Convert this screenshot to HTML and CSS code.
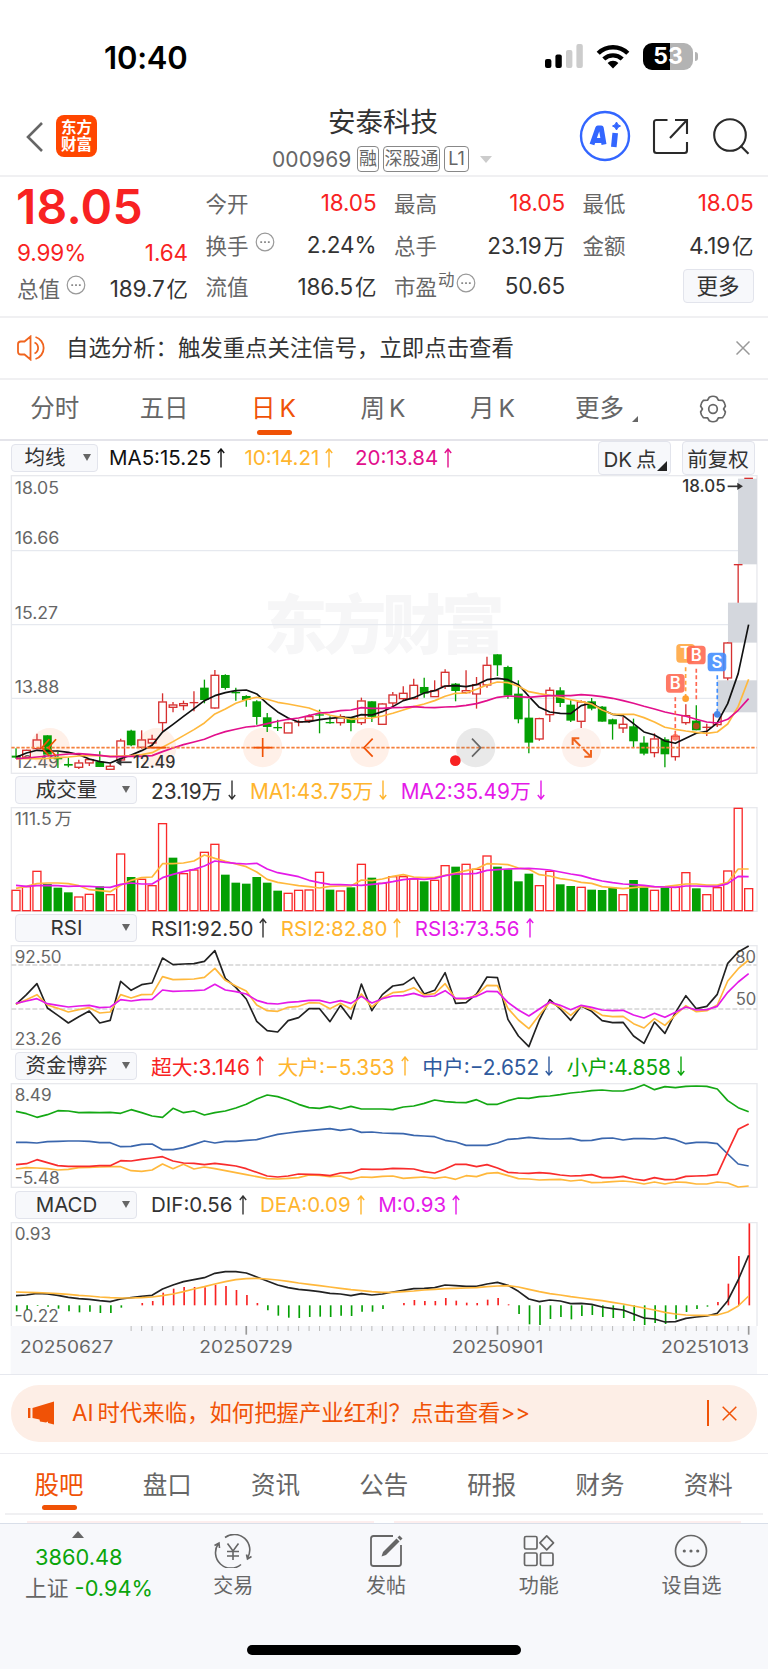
FILE: index.html
```
<!DOCTYPE html>
<html lang="zh-CN">
<head>
    <meta charset="UTF-8">
    <meta name="viewport" content="width=device-width, initial-scale=1.0">
    <title>安泰科技 000969</title>
    <link rel="stylesheet" href="styles.css">
</head>
<body>
    <svg class="defs" width="0" height="0">
        <symbol id="up" viewBox="0 0 8 20"><path d="M4 19.5V1M.8 5 4 1l3.2 4" fill="none" stroke="currentColor" stroke-width="1.4"/></symbol>
        <symbol id="down" viewBox="0 0 8 20"><path d="M4 .5V19M.8 15 4 19l3.2-4" fill="none" stroke="currentColor" stroke-width="1.4"/></symbol>
        <symbol id="dots" viewBox="0 0 20 20"><circle cx="10" cy="10" r="8.8" fill="none" stroke="#999" stroke-width="1.2"/><path d="M5.3 9.2h1.8v1.8H5.3zM9.1 9.2h1.8v1.8H9.1zM12.9 9.2h1.8v1.8h-1.8z" fill="#888"/></symbol>
    </svg>

    <!-- 状态栏 -->
    <div class="status">
        <span class="time">10:40</span>
        <svg class="signal" width="39" height="24" viewBox="0 0 39 24">
            <rect x="0" y="15" width="6.4" height="9" rx="2"/><rect x="10.4" y="10.5" width="6.4" height="13.5" rx="2"/>
            <rect x="21" y="6" width="6.4" height="18" rx="2" fill="#ccc"/><rect x="31.4" y="0" width="6.4" height="24" rx="2" fill="#ccc"/>
        </svg>
        <svg class="wifi" width="34" height="25" viewBox="0 0 34 25">
            <path d="M2.2 9.3a21 21 0 0 1 29.6 0M7.8 15a13.4 13.4 0 0 1 18.4 0" fill="none" stroke="#000" stroke-width="4.4"/>
            <path d="M17 24.4l-5.4-5.5a7.8 7.8 0 0 1 10.8 0z"/>
        </svg>
        <div class="battery"><span>5</span><span>3</span></div>
        <i class="battery-cap"></i>
    </div>

    <!-- 顶部导航 -->
    <header>
        <svg class="back" width="18" height="32" viewBox="0 0 18 32"><path d="M16 2 2 16l14 14" fill="none" stroke="#666" stroke-width="2.6"/></svg>
        <div class="logo">东方<br>财富</div>
        <div class="title">
            <h1>安泰科技</h1>
            <div class="code"><span>000969</span><b>融</b><b class="wide">深股通</b><b>L1</b><i class="tri"></i></div>
        </div>
        <svg class="ai" width="52" height="52" viewBox="0 0 52 52">
            <circle cx="26" cy="26" r="24" fill="#fff" stroke="#36f" stroke-width="2.4"/>
            <path d="M13 34.500 18.800 18h3.400l2.800 16.500M15.500 30.500h8" fill="none" stroke="#36f" stroke-width="5" stroke-linejoin="round"/>
            <path d="M36.200 23 34.800 37" stroke="#36f" stroke-width="5.600"/>
            <path d="M37.500 12q.8 3.200 4 4-3.200.8-4 4-.8-3.200-4-4 3.200-.8 4-4z" fill="#36f" stroke="#36f"/>
        </svg>
        <svg class="share" width="38" height="38" viewBox="0 0 38 38"><path d="M15.500 2H4.500Q2 2 2 4.500v28Q2 35 4.500 35h28q2.500 0 2.500-2.500V24M23 2h12v14M34.500 2.500 18 20" fill="none" stroke="#2a2a2a" stroke-width="2.100"/></svg>
        <svg class="search" width="38" height="38" viewBox="0 0 38 38"><circle cx="18" cy="18" r="15.800" fill="none" stroke="#2a2a2a" stroke-width="2.100"/><path d="m28.500 28.800 8 8" stroke="#2a2a2a" stroke-width="2.200"/></svg>
    </header>

    <!-- 行情 -->
    <section class="quote">
        <div class="main">
            <strong>18.05</strong>
            <div class="line red change"><span>9.99%</span><span>1.64</span></div>
            <div class="line"><label>总值<svg class="dots"><use href="#dots"/></svg></label><span>189.7<em>亿</em></span></div>
        </div>
        <div class="col">
            <div class="line red"><label>今开</label><span>18.05</span></div>
            <div class="line"><label>换手<svg class="dots"><use href="#dots"/></svg></label><span>2.24%</span></div>
            <div class="line"><label>流值</label><span>186.5<em>亿</em></span></div>
        </div>
        <div class="col">
            <div class="line red"><label>最高</label><span>18.05</span></div>
            <div class="line"><label>总手</label><span>23.19<em>万</em></span></div>
            <div class="line"><label>市盈<sup>动</sup><svg class="dots near"><use href="#dots"/></svg></label><span>50.65</span></div>
        </div>
        <div class="col">
            <div class="line red"><label>最低</label><span>18.05</span></div>
            <div class="line"><label>金额</label><span>4.19<em>亿</em></span></div>
            <div class="line end"><button class="more">更多</button></div>
        </div>
    </section>

    <div class="notice">
        <svg width="30" height="26" viewBox="0 0 30 26"><path d="M13.500 1.500v23L7.500 19.500H3.800Q1 19.500 1 16.700V9.300Q1 6.500 3.800 6.500h3.700zM17.500 7.500a6 6 0 0 1 0 11M18.500 2a11.500 11.500 0 0 1 0 22" fill="none" stroke="#f0641e" stroke-width="1.800"/></svg>
        <p>自选分析：触发重点关注信号，立即点击查看</p>
        <svg class="close" width="14" height="14" viewBox="0 0 14 14"><path d="m.5.5 13 13M13.500.5l-13 13" stroke="#999" stroke-width="1.500"/></svg>
    </div>

    <nav class="periods">
        <a>分时</a><a>五日</a><a class="on">日<s></s>K</a><a>周<s></s>K</a><a>月<s></s>K</a><a class="drop">更多</a>
        <svg width="28" height="28" viewBox="0 0 28 28"><path d="M10.300 2.200Q14 .3 17.700 2.200L19.500 5.200 23.600 5.400Q26 7.500 26.400 11L24.600 14 26.400 17Q26 20.500 23.600 22.600L19.500 22.800 17.700 25.800Q14 27.700 10.300 25.800L8.500 22.800 4.400 22.600Q2 20.500 1.600 17L3.400 14 1.600 11Q2 7.500 4.400 5.400L8.500 5.200z" fill="none" stroke="#666" stroke-width="1.700" stroke-linejoin="round"/><circle cx="14" cy="14" r="4.300" fill="none" stroke="#666" stroke-width="1.700"/></svg>
    </nav>

    <!-- K线图 -->
    <div class="legend first">
        <button class="pick small">均线</button>
        <span class="v black m1">MA5:15.25<svg><use href="#up"/></svg></span>
        <span class="v orange m2">10:14.21<svg><use href="#up"/></svg></span>
        <span class="v pink m3">20:13.84<svg><use href="#up"/></svg></span>
        <button class="side dk">DK<s></s>点</button>
        <button class="side">前复权</button>
    </div>
    <svg class="chart" id="kline" viewBox="0 29 2304 898" width="768" height="299.300"></svg>

    <div class="legend l-vol">
        <button class="pick">成交量</button>
        <span class="v">23.19万<svg><use href="#down"/></svg></span>
        <span class="v orange">MA1:43.75万<svg><use href="#down"/></svg></span>
        <span class="v purple">MA2:35.49万<svg><use href="#down"/></svg></span>
    </div>
    <svg class="chart" id="volume" viewBox="0 111 2304 315" width="768" height="105"></svg>

    <div class="legend l-rsi">
        <button class="pick">RSI</button>
        <span class="v">RSI1:92.50<svg><use href="#up"/></svg></span>
        <span class="v orange">RSI2:82.80<svg><use href="#up"/></svg></span>
        <span class="v purple">RSI3:73.56<svg><use href="#up"/></svg></span>
    </div>
    <svg class="chart" id="rsi" viewBox="0 525 2304 315" width="768" height="105"></svg>

    <div class="legend l-fund">
        <button class="pick">资金博弈</button>
        <span class="v red">超大:3.146<svg><use href="#up"/></svg></span>
        <span class="v orange">大户:−5.353<svg><use href="#up"/></svg></span>
        <span class="v blue">中户:−2.652<svg><use href="#down"/></svg></span>
        <span class="v green">小户:4.858<svg><use href="#down"/></svg></span>
    </div>
    <svg class="chart" id="fund" viewBox="0 99 2304 315" width="768" height="105"></svg>

    <div class="legend l-macd">
        <button class="pick">MACD</button>
        <span class="v">DIF:0.56<svg><use href="#up"/></svg></span>
        <span class="v orange">DEA:0.09<svg><use href="#up"/></svg></span>
        <span class="v purple">M:0.93<svg><use href="#up"/></svg></span>
    </div>
    <svg class="chart" id="macd" viewBox="0 516 2304 456" width="768" height="152"></svg>

    <!-- 推广条 -->
    <div class="promo-wrap">
        <div class="promo">
            <svg width="28" height="24" viewBox="0 0 28 24"><path d="M0 7h2.400v10H0zM4.500 7 26 .5v23L20 22v-1.500L18 21.500l-6-1-.5-2-7-1.500z" fill="#f05206"/></svg>
            <p>AI<s></s>时代来临，如何把握产业红利？点击查看&gt;&gt;</p>
            <i></i>
            <svg class="close" width="15" height="15" viewBox="0 0 15 15"><path d="m.7.7 13.600 13.600M14.300.7.7 14.300" stroke="#f05206" stroke-width="1.500"/></svg>
        </div>
    </div>

    <nav class="sections">
        <a class="on">股吧</a><a>盘口</a><a>资讯</a><a>公告</a><a>研报</a><a>财务</a><a>资料</a>
    </nav>
    <div class="peek"><i></i><i></i></div>

    <!-- 底部工具栏 -->
    <footer>
        <div class="index">
            <i class="caret"></i>
            <span class="green">3860.48</span>
            <div>上证<span class="green">-0.94%</span></div>
        </div>
        <div class="tool">
            <svg width="38" height="34" viewBox="0 0 38 34"><g fill="none" stroke="#666" stroke-width="1.600"><path d="M11 3.500A15.500 15.500 0 0 1 33.500 24M27 30.500A15.500 15.500 0 0 1 4.500 9.500M.5 11.500l4.500-2.500.5 5M37.500 22.500 33.500 25l-1-4.500"/><path d="m13.500 9.500 5.500 7.500 5.500-7.500M19 17v9M13 17.500h12M13 22h12"/></g></svg>
            <span>交易</span>
        </div>
        <div class="tool">
            <svg width="34" height="34" viewBox="0 0 34 34"><path d="M24 2H4.500Q2 2 2 4.500v25Q2 32 4.500 32h25q2.500 0 2.500-2.500V11" fill="none" stroke="#666" stroke-width="1.800"/><path d="m12.500 22.500 1.500-4.500L27.500 4.500l3 3L17 21z" fill="#666"/><path d="m28.500 3.500 2-2 3 3-2 2z" fill="#666"/></svg>
            <span>发帖</span>
        </div>
        <div class="tool">
            <svg width="32" height="34" viewBox="0 0 32 34"><g fill="none" stroke="#666" stroke-width="1.700"><rect x="1.500" y="2.500" width="12.500" height="12.500" rx="1.500"/><rect x="1.500" y="19" width="12.500" height="12.500" rx="1.500"/><rect x="17.500" y="19" width="12.500" height="12.500" rx="1.500"/><path d="M23.700 1.800 30.500 8.800 23.700 15.800 16.900 8.800z" stroke-linejoin="round"/></g></svg>
            <span>功能</span>
        </div>
        <div class="tool">
            <svg width="34" height="34" viewBox="0 0 34 34"><circle cx="17" cy="17" r="15.500" fill="none" stroke="#666" stroke-width="1.700"/><g fill="#666"><circle cx="10.300" cy="17" r="1.600"/><circle cx="17" cy="17" r="1.600"/><circle cx="23.700" cy="17" r="1.600"/></g></svg>
            <span>设自选</span>
        </div>
    </footer>
    <div class="home"><i></i></div>
    <script src="chart.js"></script>
</body>
</html>
```
FILE: styles.css
```
* { box-sizing: border-box; }
body {
  margin: 0;
  width: 768px;
  height: 1669px;
  overflow: hidden;
  background: #fff;
  color: #333;
  font-family: Inter, "Noto Sans CJK SC", sans-serif;
}
h1, p { margin: 0; font-weight: normal; }
i, em { font-style: normal; }
s { display: inline-block; width: 4px; }
svg { display: block; flex: none; }
button { font: inherit; color: inherit; padding: 0; background: #f7f8fb; border: 1.5px solid #e2e4ec; border-radius: 4px; }
.defs { position: absolute; }
.red { color: #f82222; }
.green { color: #0ba50b; }
.blue { color: #2f5a9e; }
.orange { color: #ffb52e; }
.pink { color: #e2108c; }
.purple { color: #e41ae8; }
.black { color: #111; }

/* 状态栏 */
.status { display: flex; height: 110px; padding-left: 104px; align-items: flex-start; color: #000; }
.time { width: 441px; margin-top: 39px; font-size: 31px; line-height: 37px; font-weight: 600; letter-spacing: -.2px; }
.signal { margin-top: 44px; }
.wifi { margin: 44px 0 0 12px; }
.battery { display: flex; width: 50px; height: 27px; margin: 43px 0 0 13px; border-radius: 9px; overflow: hidden; background: linear-gradient(90deg, #000 53%, #b3b3b3 53%); color: #fff; font-size: 23px; line-height: 27px; font-weight: 700; justify-content: center; }
.battery-cap { width: 3px; height: 9px; margin: 52px 0 0 2px; background: #b3b3b3; border-radius: 0 3px 3px 0; }

/* 导航 */
header { display: flex; height: 67px; border-bottom: 2px solid #f0f0f2; }
.back { margin: 11px 0 0 26px; }
.logo { width: 41px; height: 42px; margin: 5px 0 0 12px; padding-top: 4px; border-radius: 8px; background: #ff4600; color: #fff; font-size: 15.500px; line-height: 17px; font-weight: 700; text-align: center; }
.title { width: 240px; margin-left: 165px; }
.title h1 { margin-left: 66px; margin-top: -8px; font-size: 27.500px; line-height: 40px; }
.code { display: flex; height: 26px; margin-top: 4px; margin-left: 10px; color: #666; font-size: 21px; line-height: 27px; align-items: flex-start; }
.code span { width: 85px; letter-spacing: .1px; }
.code b { width: 22px; height: 26px; margin-right: 4px; border: 1.5px solid #888; border-radius: 4px; font-size: 18px; line-height: 24px; font-weight: normal; text-align: center; white-space: nowrap; }
.code b:last-of-type { width: 25px; }
.code .wide { width: 57px; }
.tri { margin: 10px 0 0 7px; border: 6px solid transparent; border-top: 7px solid #ccc; border-bottom: 0; }
.ai { margin: 0 0 0 77px; }
.share { margin: 8px 0 0 21px; }
.search { margin: 7px 0 0 22px; }

/* 行情 */
.quote { display: flex; height: 141px; padding-top: 5px; border-bottom: 2px solid #f0f0f2; font-size: 22.500px; padding-left: 17px; }
.main { width: 171px; }
.main strong { display: block; height: 49px; font-size: 48px; line-height: 49px; font-weight: 600; color: #f82222; letter-spacing: .2px; margin-left: -1px; }
.col { width: 171px; margin-left: 17.500px; }
.line { display: flex; height: 41.500px; align-items: center; justify-content: space-between; white-space: nowrap; letter-spacing: -.1px; }
.line.end { justify-content: flex-end; }
.change { height: 43px; margin-bottom: -7px; }
.line label { display: flex; color: #666; font-size: 21.500px; letter-spacing: 0; }
.line em { margin-left: 2px; font-size: 21.500px; }
.dots { width: 20px; height: 20px; margin: 3px 0 0 6px; }
.near { margin-left: 1px; }
sup { font-size: 16.500px; line-height: 20px; height: 20px; margin-left: 1px; }
.more { width: 71px; height: 34px; line-height: 30px; font-size: 21.500px; }

.notice { display: flex; height: 62px; padding-left: 17px; align-items: center; border-bottom: 2px solid #f0f0f2; }
.notice p { width: 670px; margin-left: 19px; font-size: 22.400px; line-height: 32px; }

/* 周期 */
.periods { display: flex; height: 61px; border-bottom: 2px solid #e4e4ea; color: #666; font-size: 24.500px; line-height: 57px; padding-right: 41px; }
.periods a { width: 109.500px; text-align: center; position: relative; }
.periods .drop { width: 105px; }
.periods svg { margin: 15px 0 0 47px; }
.periods .on, .sections .on { color: #f05206; position: relative; }
.periods .on::after, .sections .on::after { content: ""; position: absolute; left: 50%; bottom: 4px; width: 35px; height: 5px; margin-left: -17px; border-radius: 3px; background: #f05206; }
.drop::after { content: ""; position: absolute; right: 14px; bottom: 17px; border: 3.500px solid #666; border-top-color: transparent; border-left-color: transparent; }

/* 指标行 */
.legend { position: relative; display: flex; height: 33px; padding-left: 15px; align-items: center; font-size: 20.500px; white-space: nowrap; }
.first { padding-left: 11px; height: 33.700px; font-size: 20.500px; }
.l-macd { height: 34px; }
.pick { position: relative; width: 122px; height: 28px; margin-right: 14px; padding-right: 19px; line-height: 24px; font-size: 20.500px; }
.pick::after { content: ""; position: absolute; right: 6px; top: 9px; border: 4px solid transparent; border-top: 7px solid #666; border-bottom: 0; }
.small { width: 87px; margin-right: 11px; }
.v { display: flex; align-items: center; margin-right: 13.500px; }
.v svg { width: 8px; height: 20px; margin-left: 6px; }
.l-vol .v { font-size: 20.800px; }
.l-fund .v { font-size: 20.800px; }
.m1 { width: 122px; }
.m2 { width: 97px; }
.m3 { width: 229px; }
.side { width: 73px; height: 34px; }
.dk { position: relative; margin-right: 11px; padding-right: 8px; }
.dk::after { content: ""; position: absolute; right: 3px; bottom: 3px; border: 5px solid #222; border-top-color: transparent; border-left-color: transparent; }
.chart { font-family: Inter, "Noto Sans CJK SC", sans-serif; }

/* 推广条 */
.promo-wrap { height: 80px; padding: 10px 11px 0; border-top: 1.500px solid #e6e8ee; border-bottom: 1.500px solid #ececf0; }
.promo { display: flex; height: 57px; padding-left: 17px; align-items: center; border-radius: 28px; background: #fdeee6; color: #f05206; font-size: 22.400px; }
.promo p { width: 635px; margin-left: 16px; line-height: 32px; }
.promo i { width: 1.500px; height: 26px; margin-right: 13px; background: #f05206; }

.sections { display: flex; height: 61px; margin: 0 5px; border-bottom: 2px solid #f0f0f2; color: #666; font-size: 24.500px; line-height: 62px; }
.sections a { width: 108.200px; text-align: center; }
.sections .on::after { bottom: 3px; left: 50%; }
.peek { display: flex; height: 8px; padding: 6px 27px 0; gap: 20px; }
.peek i { flex: 1; height: 2px; background: #fdeeee; }

/* 底部 */
footer { display: flex; height: 94px; background: #f7f8fb; border-top: 1.500px solid #d9dfe9; color: #666; }
.index { width: 157px; padding-left: 25px; font-size: 21.800px; }
.index > span { display: block; margin: 5px 0 0 10px; line-height: 29px; }
.index div { display: flex; gap: 6px; line-height: 32px; }
.caret { display: block; width: 12px; margin: 7px 0 0 47px; border: 6px solid transparent; border-bottom: 7px solid #666; border-top: 0; }
.tool { width: 152.700px; padding-top: 10px; display: flex; flex-direction: column; align-items: center; font-size: 20px; line-height: 36px; }
.home { height: 52px; padding-top: 28px; background: #f7f8fb; }
.home i { display: block; width: 274px; height: 10px; margin: 0 auto; border-radius: 5px; background: #000; }
```
FILE: chart.js
```
// 每根K线的横坐标，图表坐标为屏幕像素的3倍
const X0 = 48, STEP = 31.4;
const RED = '#d63030', GREEN = '#04a004';
const px = i => X0 + STEP * i;

const line = (d, color, w = 5) =>
    `<polyline points="${d.map((y, i) => px(i).toFixed(1) + ',' + y).join(' ')}" fill="none" stroke="${color}" stroke-width="${w}" stroke-linejoin="round"/>`;
const rect = (x, y, w, h, fill, extra = '') => `<rect x="${x}" y="${y}" width="${w}" height="${h}" fill="${fill}" ${extra}/>`;
const seg = (x1, y1, x2, y2, color, w = 4, extra = '') => `<path d="M${x1} ${y1}L${x2} ${y2}" stroke="${color}" stroke-width="${w}" fill="none" ${extra}/>`;
const text = (x, y, s, len, fill = '#666', extra = '') => `<text x="${x}" y="${y}" font-size="50" fill="${fill}" textLength="${len}" lengthAdjust="spacingAndGlyphs" ${extra}>${s}</text>`;
const frame = (y, h) => rect(34, y, 2237, h, 'none', 'stroke="#e8e9ed" stroke-width="4"');
const draw = (id, parts) => { document.getElementById(id).innerHTML = parts.join(''); };

// [方向, 最高, 实体上沿, 实体下沿, 最低]
const candles = [
    [0,849,871,877,880],[1,853,854,876,878],[1,805,823,850,852],[0,810,810,868,870],[0,860,877,882,908],[0,877,896,901,906],
    [1,883,892,906,911],[1,880,882,893,902],[0,858,889,905,905],[1,895,902,912,914],[1,820,826,884,886],[0,793,796,840,843],
    [1,795,823,846,850],[1,808,821,833,840],[1,684,709,772,797],[1,710,718,726,741],[1,706,714,721,735],[1,678,711,713,738],
    [0,643,667,704,714],[1,614,629,728,730],[0,627,629,668,673],[0,667,680,684,706],[0,690,692,704,724],[0,705,708,755,778],
    [0,743,756,785,800],[0,763,785,789,797],[1,770,772,803,803],[1,763,769,773,783],[1,747,753,765,773],[0,733,747,751,804],
    [0,753,770,774,775],[1,747,753,772,781],[0,755,757,773,798],[1,697,706,772,779],[0,708,708,755,770],[1,713,715,777,777],
    [1,680,688,713,725],[1,663,683,700,707],[1,640,659,700,702],[0,637,665,685,697],[1,645,675,694,694],[1,612,620,663,671],
    [0,653,655,677,708],[1,615,675,682,685],[1,635,657,686,730],[1,574,599,659,667],[0,567,567,600,632],[0,601,605,691,700],
    [0,645,685,762,774],[0,700,757,832,864],[1,757,759,821,826],[1,666,674,748,770],[0,666,675,713,725],[0,705,718,766,770],
    [1,705,709,768,788],[0,698,708,730,735],[0,722,724,769,769],[0,760,762,777,823],[1,755,776,788,803],[0,760,783,828,848],
    [0,813,832,865,870],[1,804,820,862,876],[0,816,822,867,906],[1,806,812,874,886],[1,717,750,772,778],[0,720,766,795,795],
    [1,775,785,787,812],[1,742,746,778,785],[1,530,532,638,645],[1,297,297,298,412],[1,38,38,40,40]
];
const ma5 = [876,863,855,857,857,861,868,881,889,893,880,869,856,840,800,777,753,730,706,691,682,676,674,686,715,740,758,770,769,763,759,756,757,748,749,739,724,706,697,683,676,662,661,664,658,643,639,643,658,693,726,740,744,745,721,713,733,747,751,775,800,809,827,834,819,804,798,773,715,625,478];
const ma10 = [880,880,880,879,877,875,872,870,871,873,872,871,868,862,846,829,811,793,773,746,731,714,703,696,702,711,716,722,728,740,750,756,762,759,758,752,744,734,724,716,706,693,684,683,672,659,650,652,663,679,685,690,696,703,709,716,734,747,747,747,757,770,786,792,797,801,804,800,776,724,642];
const ma20 = [880,878,875,872,869,866,865,867,870,874,874,873,873,871,859,848,838,830,822,809,799,792,785,782,775,768,762,758,751,743,741,736,734,727,729,729,727,726,724,726,727,725,724,720,715,706,696,692,694,696,693,691,691,691,688,690,694,699,706,714,723,731,740,747,753,762,770,773,762,735,700];

const candle = ([up, hi, top, bot, lo], i) => {
    const x = px(i), c = up ? RED : GREEN, h = bot - top;
    if (!up) return seg(x, hi, x, lo, c) + rect(x - 13, top, 26, Math.max(h, 4), c);
    const body = h < 5
        ? rect(x - 13, top - 1, 26, 4, c)
        : rect(x - 11.500, top + 1, 23, h - 1, 'none', `stroke="${c}" stroke-width="4"`);
    return seg(x, hi, x, top, c) + seg(x, bot, x, lo, c) + body;
};
const badge = (x, y, s, color) =>
    rect(x, y, 56, 56, color, 'rx="11" fill-opacity=".88"') +
    `<text x="${x + 28}" y="${y + 46}" font-size="50" font-weight="600" fill="#fff" text-anchor="middle">${s}</text>`;
const dash = (x, y1, y2, color) => seg(x, y1, x, y2, color, 5, 'stroke-dasharray="12 8"');
const disc = (x, fill = '#fff0e8') => `<circle cx="${x}" cy="847" r="59" fill="${fill}"/>`;

draw('kline', [
    `<text x="792" y="549" font-size="190" font-weight="900" fill="#f6f6f7" textLength="722">东方财富</text>`,
    frame(31, 893),
    seg(34, 256, 2270, 256, '#e6e9ef'), seg(34, 478, 2270, 478, '#e6e9ef'), seg(34, 699, 2270, 699, '#e6e9ef'),
    rect(2214, 40, 57, 257, '#d4d7dd'), rect(2184, 412, 87, 120, '#d4d7dd'), rect(2152, 645, 119, 96, '#d4d7dd'),
    disc(150), disc(470), disc(788), disc(1108), disc(1745, '#fdf1ec'),
    text(44, 87, '18.05', 133), text(44, 237, '16.66', 134), text(44, 460, '15.27', 130), text(44, 683, '13.88', 134), text(46, 907, '12.49', 130),
    ...candles.map(candle),
    line(ma5, '#111'), line(ma10, '#ffb83c'), line(ma20, '#e2108c'),
    seg(34, 847, 2270, 847, '#f5803c', 5, 'stroke-dasharray="10 5"'),
    // 图上操作按钮
    `<path d="M148 822l-23 25 23 25M168 822l-23 25 23 25M444 847h54M761 847h56M788 818v57M1118 820l-26 27 26 27" fill="none" stroke="#f05206" stroke-width="5"/>`,
    `<path d="M1741 842l-23-23M1718 839v-20h20M1750 851l23 23M1773 854v20h-20" fill="none" stroke="#f0641e" stroke-width="6"/>`,
    disc(1427, 'rgba(120,120,120,.16)'),
    `<path d="M1416 820l26 27-26 27" fill="none" stroke="#666" stroke-width="5"/>`,
    `<circle cx="1366" cy="886" r="16" fill="#f82222"/>`,
    // 最高最低标注
    text(2047, 81, '18.05', 130, '#333', 'font-weight="500"'), seg(2183, 63, 2220, 63, '#333', 5), `<path d="M2212 52l17 11-17 11z" fill="#333"/>`,
    text(399, 908, '12.49', 127, '#333', 'font-weight="500"'), seg(358, 891, 395, 891, '#333', 5), `<path d="M364 880l-17 11 17 11z" fill="#333"/>`,
    // 买卖点
    dash(2026, 696, 812, '#ff6650'), dash(2057, 606, 700, '#ffa53c'), dash(2089, 610, 708, '#ff6650'), dash(2152, 630, 746, '#3c8cff'),
    `<circle cx="2026" cy="816" r="10" fill="#ff6650" fill-opacity=".8"/><circle cx="2057" cy="700" r="10" fill="#ffa030"/><circle cx="2089" cy="782" r="10" fill="#b0521e"/><circle cx="2152" cy="747" r="10" fill="#4888e8"/>`,
    badge(1998, 626, 'B', '#ff6650'), badge(2029, 536, 'T', '#ffa53c'), badge(2061, 541, 'B', '#ff6650'), badge(2123, 562, 'S', '#408cff')
]);

// 成交量，1为阳线
const volTop = [361,350,304,343,354,368,381,373,350,374,252,322,328,347,161,264,311,300,247,223,315,339,342,322,339,363,370,361,360,307,360,363,353,283,324,340,320,320,327,335,331,287,291,283,298,258,291,299,335,312,347,304,344,349,352,360,361,354,374,331,353,361,353,352,308,356,374,353,303,115,356];
const volColors = [1,1,1,0,0,0,1,1,0,1,1,0,1,1,1,0,1,1,1,1,0,0,0,0,0,0,1,1,1,1,0,1,0,1,0,1,1,1,1,0,1,1,0,1,1,1,0,0,0,0,1,1,0,0,1,0,0,0,1,0,0,1,0,1,1,0,1,1,1,1,1];
const vma1 = [355,349,341,339,339,341,347,359,362,365,346,331,323,321,281,281,279,273,255,265,274,282,290,306,328,337,342,347,350,354,349,348,348,330,332,327,319,314,321,323,322,316,309,302,296,281,282,284,294,298,314,318,326,330,337,340,350,353,356,353,350,351,350,346,342,342,345,345,337,297,297];
const vma2 = [346,349,347,346,347,349,348,349,351,352,343,339,342,342,323,313,305,298,288,273,277,280,282,280,297,308,314,320,331,338,343,344,345,346,343,340,335,329,326,328,325,317,312,312,310,301,299,297,296,295,297,300,306,312,317,326,333,338,342,344,346,350,351,352,348,348,349,349,341,319,320];
draw('volume', [
    frame(113, 311),
    text(44, 164, '111.5<tspan dx="8">万</tspan>', 172),
    ...volTop.map((y, i) => volColors[i]
        ? rect(px(i) - 12, y, 24, 422 - y, '#fff', 'stroke="#fa2a2a" stroke-width="4"')
        : rect(px(i) - 13, y - 1, 26, 425 - y, GREEN)),
    line(vma1, '#ffb83c'), line(vma2, '#e41ae8')
]);

// RSI
const rsi1 = [703,674,641,714,736,759,740,723,759,751,634,661,644,639,564,584,582,581,574,542,625,652,687,754,782,786,752,743,716,716,755,706,747,642,722,674,648,643,622,672,661,608,700,698,672,621,623,748,798,830,750,689,717,751,708,724,752,758,757,798,820,756,790,728,677,716,709,673,580,546,528];
const rsi2 = [703,689,674,705,715,726,719,713,729,726,674,684,674,673,620,629,628,627,622,595,631,648,663,705,722,724,712,709,698,699,716,700,717,672,711,684,668,665,653,675,671,641,687,687,675,646,647,715,750,776,735,697,712,736,708,718,736,740,739,761,774,746,766,735,707,725,722,705,633,596,570];
const rsi3 = [700,693,686,701,706,711,708,706,713,711,689,693,689,688,660,664,663,662,660,643,660,665,672,691,700,702,697,695,691,691,699,692,700,679,699,686,678,677,670,680,678,662,685,685,679,664,665,697,720,738,717,696,706,719,706,712,720,722,721,735,744,730,742,727,711,720,719,709,667,636,611];
draw('rsi', [
    frame(527, 311),
    seg(34, 585, 2270, 585, '#d4d4d4', 4, 'stroke-dasharray="15 6"'), seg(34, 717, 2270, 717, '#d4d4d4', 4, 'stroke-dasharray="15 6"'),
    text(44, 578, '92.50', 141), text(44, 826, '23.26', 141), text(2206, 578, '80', 62), text(2207, 706, '50', 62),
    line(rsi1, '#222'), line(rsi2, '#ffb83c'), line(rsi3, '#e41ae8')
]);

// 资金博弈
const small = [184,191,202,194,182,183,188,187,188,187,190,179,188,198,202,175,188,183,195,188,183,174,163,147,135,140,150,163,173,175,169,177,169,177,177,177,179,171,168,160,150,155,157,158,149,163,163,152,144,145,140,138,134,129,126,122,120,123,123,116,104,119,110,113,109,108,109,117,152,173,185];
const mid = [277,277,279,275,274,273,273,274,278,278,290,289,283,282,299,299,293,283,273,279,274,274,271,269,261,253,249,245,242,239,236,241,237,247,246,249,250,251,256,258,260,271,276,286,286,286,279,268,266,262,265,267,267,265,272,271,265,264,270,266,266,267,263,269,281,277,277,281,312,342,348];
const big = [357,353,354,356,360,358,353,352,351,350,350,362,364,360,342,356,343,357,351,356,362,368,374,380,386,387,385,383,375,376,380,378,388,381,382,379,378,385,383,381,385,381,388,377,380,370,368,377,386,387,390,389,388,393,390,398,397,395,393,396,402,396,402,396,397,402,402,396,399,411,408];
const huge = [344,341,329,338,347,349,349,349,347,347,332,333,328,324,320,333,339,340,344,340,344,348,356,367,378,381,378,372,373,374,377,369,368,357,358,358,355,356,357,365,369,357,343,343,350,344,354,367,369,370,368,370,375,378,377,374,383,383,379,387,391,383,389,388,379,378,377,373,305,238,222];
draw('fund', [
    frame(101, 311),
    text(44, 153, '8.49', 111), text(44, 402, '-5.48', 135),
    line(small, '#14a814'), line(mid, '#3a66ad'), line(big, '#ffb83c'), line(huge, '#f82c2c')
]);

// MACD
const ZERO = 766;
const dif = [737,735,730,732,736,742,746,748,752,755,747,743,739,736,717,705,695,689,683,670,665,665,669,681,693,705,713,718,721,725,730,732,737,731,735,732,726,721,716,715,713,705,707,709,709,702,697,706,724,747,755,750,753,761,760,763,771,776,780,792,804,807,816,815,805,801,798,790,752,690,616];
const dea = [726,727,728,729,731,733,736,738,741,743,744,744,743,741,737,732,725,717,710,702,695,689,686,685,687,690,694,699,703,707,711,715,719,722,725,727,727,725,723,720,718,716,715,714,713,710,708,707,711,718,725,731,735,740,744,748,752,757,762,768,774,780,787,792,795,796,796,795,786,768,738];
const hist = [784,779,768,770,776,784,787,785,789,789,773,766,759,753,728,716,711,711,712,704,708,720,735,759,781,797,803,804,801,800,801,797,798,785,785,777,766,759,750,753,753,744,752,758,759,749,744,763,792,823,825,807,801,808,798,795,801,804,804,813,825,819,822,808,786,777,770,756,701,618,520];
const ticks = [];
for (let i = 11; i < 71; i++) {
    const major = i === 22 || i === 46 || i === 70;
    ticks.push(seg(px(i), 828, px(i), major ? 854 : 843, major ? '#999' : '#bbb', major ? 5 : 3));
}
draw('macd', [
    rect(32, 828, 2239, 146, '#f7f8fb'),
    `<path d="M34 828V518H2271V828" fill="none" stroke="#e8e9ed" stroke-width="4"/>`,
    text(44, 570, '0.93', 109), text(44, 817, '-0.22', 132),
    ...hist.map((y, i) => seg(px(i) + 2, ZERO, px(i) + 2, y, y < ZERO ? '#f82222' : '#04a004', 5)),
    line(dif, '#222'), line(dea, '#ffb83c'),
    ...ticks,
    text(60, 909, '20250627', 280), text(598, 909, '20250729', 280), text(1355, 909, '20250901', 275), text(1983, 909, '20251013', 264)
]);
```
